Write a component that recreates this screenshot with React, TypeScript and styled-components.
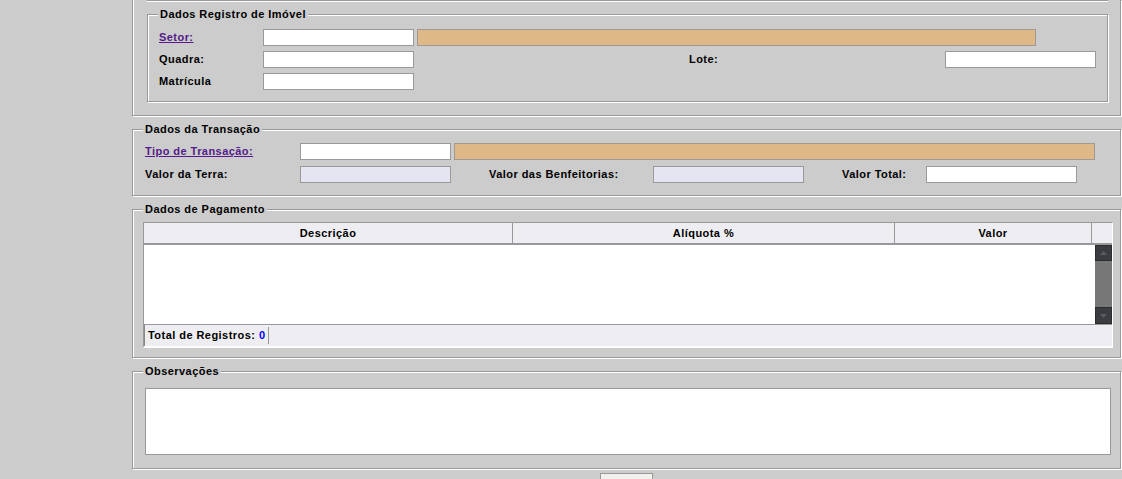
import React from "react";
import styled, { createGlobalStyle } from "styled-components";

const GlobalStyle = createGlobalStyle`
  html, body { margin: 0; padding: 0; background: #cccccc; }
  body {
    font-family: "Liberation Sans", Arial, sans-serif;
    font-size: 11px;
    color: #000;
    overflow: hidden;
  }
  * { box-sizing: border-box; }
`;

const Page = styled.div`
  display: flex;
  width: 1122px;
  height: 479px;
  overflow: hidden;
  background: #cccccc;
`;

const Sidebar = styled.aside`
  flex: none;
  width: 132px;
`;

const Main = styled.main`
  flex: none;
  width: 989px;
  display: flex;
  flex-direction: column;
  & > section + section { margin-top: 13px; }
`;

type Pad = { $pad: string; $openTop?: boolean };

const Group = styled.section<Pad>`
  position: relative;
  flex: none;
  border: 1px solid #999999;
  ${(p) => (p.$openTop ? "border-top: none;" : "")}
  box-shadow: inset 1px ${(p) => (p.$openTop ? 0 : 1)}px 0 #ffffff, 1px 1px 0 #ffffff;
  padding: ${(p) => p.$pad};
`;

const Title = styled.span`
  position: absolute;
  top: -7px;
  left: 10px;
  padding: 0 2px;
  background: #cccccc;
  font-weight: bold;
  line-height: 13px;
  letter-spacing: 0.45px;
  white-space: nowrap;
`;

const PrevEdge = styled.div`
  width: 961px;
  height: 2px;
  border-top: 1px solid #999999;
  border-bottom: 1px solid #ffffff;
`;

const InnerGroup = styled(Group)`
  width: 961px;
  margin-top: 12px;
`;

const FormRows = styled.div<{ $gap: number }>`
  display: flex;
  flex-direction: column;
  gap: ${(p) => p.$gap}px;
`;

const Row = styled.div`
  display: flex;
  align-items: center;
  height: 17px;
`;

const Label = styled.span<{ $w: number; $ml?: number }>`
  flex: none;
  width: ${(p) => p.$w}px;
  margin-left: ${(p) => p.$ml ?? 0}px;
  font-weight: bold;
  letter-spacing: 0.45px;
  white-space: nowrap;
  line-height: 13px;
`;

const Link = styled.a`
  color: #551a8b;
  text-decoration: underline;
  cursor: pointer;
`;

const Field = styled.input<{ $w: number; $bg?: string }>`
  flex: none;
  width: ${(p) => p.$w}px;
  height: 17px;
  margin: 0;
  padding: 0 3px;
  border: 1px solid #999999;
  background: ${(p) => p.$bg ?? "#ffffff"};
  font: inherit;
  outline: none;
`;

const Lookup = styled.div<{ $w: number }>`
  flex: none;
  width: ${(p) => p.$w}px;
  height: 17px;
  margin-left: 3px;
  background: #deb887;
  border: 1px solid #a09a92;
`;

const Grid = styled.div`
  width: 970px;
  display: flex;
  flex-direction: column;
  border: 1px solid;
  border-color: #999999 #ffffff #ffffff #999999;
  border-bottom-width: 2px;
`;

const HeadRow = styled.div`
  display: flex;
  height: 22px;
  background: #eeeef2;
  border-bottom: 2px solid #999999;
`;

const HeadCell = styled.div<{ $w: number }>`
  flex: none;
  width: ${(p) => p.$w}px;
  display: flex;
  align-items: center;
  justify-content: center;
  border-right: 1px solid #999999;
  font-weight: bold;
  letter-spacing: 0.45px;
  &:last-child { border-right: none; }
`;

const Body = styled.div`
  display: flex;
  height: 80px;
  background: #ffffff;
  border-bottom: 1px solid #999999;
`;

const BodyArea = styled.div`
  flex: 1;
`;

const ScrollBar = styled.div`
  flex: none;
  width: 17px;
  display: flex;
  flex-direction: column;
  background: #777777;
`;

const ScrollBtn = styled.div<{ $h: number }>`
  flex: none;
  height: ${(p) => p.$h}px;
  background: #3a3c40;
  border: 1px solid #2a2c30;
  display: flex;
  align-items: center;
  justify-content: center;
`;

const ScrollTrack = styled.div`
  flex: 1;
`;

const Footer = styled.div`
  display: flex;
  align-items: center;
  height: 21px;
  background: #eeeef2;
  border-left: 1px solid #888888;
  padding-left: 3px;
`;

const FooterText = styled.span`
  font-weight: bold;
  letter-spacing: 0.45px;
  padding-right: 3px;
  border-right: 1px solid #999999;
  line-height: 17px;
`;

const Count = styled.span`
  color: #0000ff;
`;

const Notes = styled.textarea`
  display: block;
  width: 966px;
  height: 67px;
  margin: 0;
  border: 1px solid #999999;
  background: #ffffff;
  resize: none;
  outline: none;
  font: inherit;
`;

const ButtonBar = styled.div`
  display: flex;
  justify-content: center;
  margin-top: 4px;
`;

const Button = styled.button`
  width: 53px;
  height: 24px;
  border: 1px solid #999999;
  background: #f2f0ec;
  font: inherit;
  padding: 0;
`;

const Arrow = ({ up }: { up?: boolean }) => (
  <svg width="7" height="4" viewBox="0 0 7 4">
    <path d={up ? "M0 4 L3.5 0 L7 4 Z" : "M0 0 L3.5 4 L7 0 Z"} fill="#5a5c61" />
  </svg>
);

export default function App() {
  return (
    <>
      <GlobalStyle />
      <Page>
        <Sidebar />
        <Main>
          <Group $openTop $pad="0 12px 13px 14px">
            <PrevEdge />
            <InnerGroup $pad="14px 12px 11px 11px">
              <Title>Dados Registro de Imóvel</Title>
              <FormRows $gap={5}>
                <Row>
                  <Label $w={104}>
                    <Link>Setor:</Link>
                  </Label>
                  <Field $w={151} />
                  <Lookup $w={619} />
                </Row>
                <Row>
                  <Label $w={104}>Quadra:</Label>
                  <Field $w={151} />
                  <Label $w={256} $ml={275}>
                    Lote:
                  </Label>
                  <Field $w={151} />
                </Row>
                <Row>
                  <Label $w={104}>Matrícula</Label>
                  <Field $w={151} />
                </Row>
              </FormRows>
            </InnerGroup>
          </Group>

          <Group $pad="13px 12px 12px 12px">
            <Title>Dados da Transação</Title>
            <FormRows $gap={6}>
              <Row>
                <Label $w={155}>
                  <Link>Tipo de Transação:</Link>
                </Label>
                <Field $w={151} />
                <Lookup $w={641} />
              </Row>
              <Row>
                <Label $w={155}>Valor da Terra:</Label>
                <Field $w={151} $bg="#e5e5f2" readOnly />
                <Label $w={164} $ml={38}>
                  Valor das Benfeitorias:
                </Label>
                <Field $w={151} $bg="#e5e5f2" readOnly />
                <Label $w={84} $ml={38}>
                  Valor Total:
                </Label>
                <Field $w={151} />
              </Row>
            </FormRows>
          </Group>

          <Group $pad="12px 7px 9px 10px">
            <Title>Dados de Pagamento</Title>
            <Grid>
              <HeadRow>
                <HeadCell $w={369}>Descrição</HeadCell>
                <HeadCell $w={382}>Alíquota %</HeadCell>
                <HeadCell $w={197}>Valor</HeadCell>
                <HeadCell $w={20} />
              </HeadRow>
              <Body>
                <BodyArea />
                <ScrollBar>
                  <ScrollBtn $h={16}>
                    <Arrow up />
                  </ScrollBtn>
                  <ScrollTrack />
                  <ScrollBtn $h={17}>
                    <Arrow />
                  </ScrollBtn>
                </ScrollBar>
              </Body>
              <Footer>
                <FooterText>
                  Total de Registros: <Count>0</Count>
                </FooterText>
              </Footer>
            </Grid>
          </Group>

          <Group $pad="16px 9px 13px 12px">
            <Title>Observações</Title>
            <Notes />
          </Group>

          <ButtonBar>
            <Button type="button" aria-label="Ação" />
          </ButtonBar>
        </Main>
      </Page>
    </>
  );
}
